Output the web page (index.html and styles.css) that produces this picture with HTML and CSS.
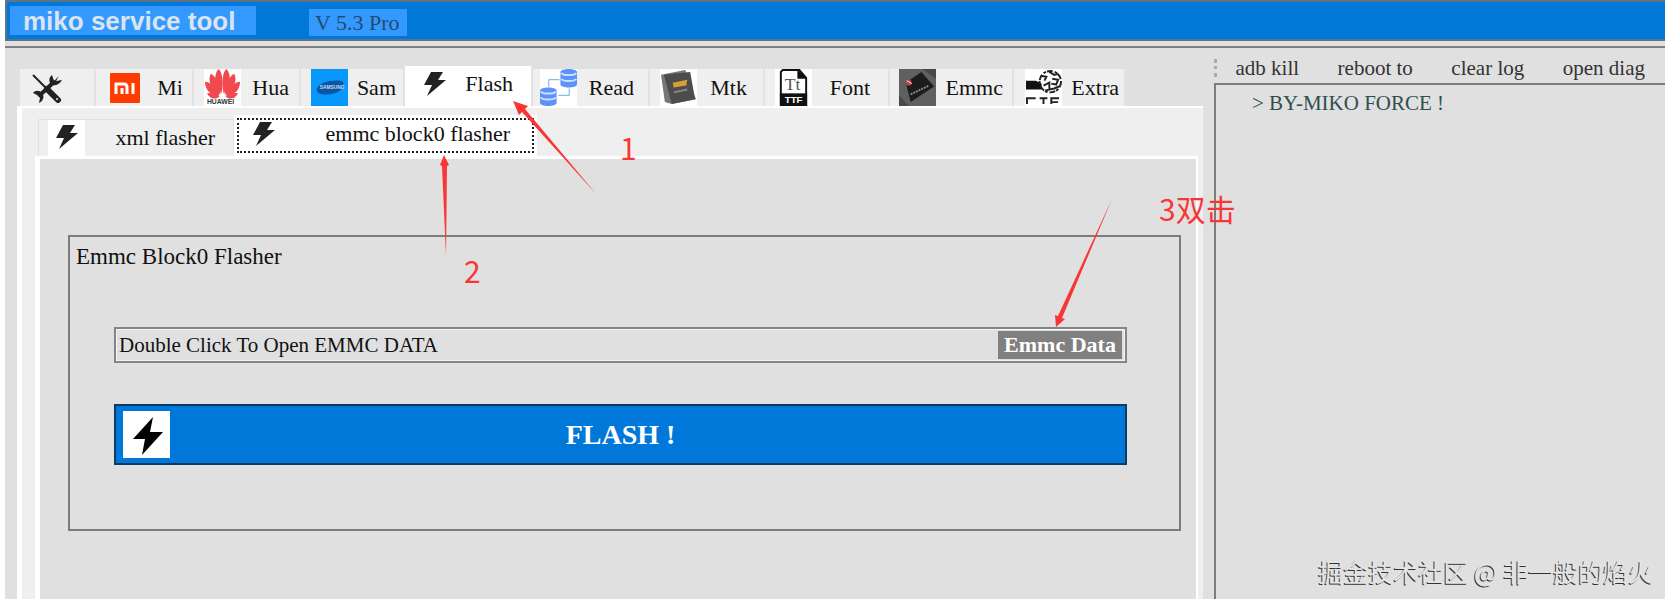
FILE: index.html
```html
<!DOCTYPE html>
<html lang="en">
<head>
    <meta charset="UTF-8">
    <meta name="viewport" content="width=device-width, initial-scale=1.0">
    <title>miko service tool</title>
    <link rel="stylesheet" href="styles.css">
</head>
<body>
    <svg class="symbols" aria-hidden="true">
        <symbol id="bolt" viewBox="0 0 24 26">
            <path d="M8 1H20L15 9H23L4 25L9 14H1Z"/>
        </symbol>
    </svg>

    <div class="window">
        <header class="titlebar">
            <h1 class="app-name">miko service tool</h1>
            <span class="version">V 5.3 Pro</span>
        </header>

        <div class="content">
            <main class="work">
                <nav class="tabs">
                    <button class="tab tab-tools" aria-label="Tools">
                        <svg class="icon-small" viewBox="0 0 30 30">
                            <path d="M1 2L14 15" stroke="#222" stroke-width="2"/>
                            <path d="M15 16L26 27" stroke="#222" stroke-width="6" stroke-linecap="round"/>
                            <path d="M7 23L23 8" stroke="#222" stroke-width="4"/>
                            <path d="M27 3L22 8L20 2C16 5 17 10 20 12C24 13 28 11 30 7L24 8Z" fill="#222"/>
                            <path d="M1 20C3 17 8 17 10 20C13 24 11 28 7 30L8 25L5 22Z" fill="#222"/>
                            <circle cx="25" cy="26" r="1" fill="#eee"/>
                        </svg>
                    </button>
                    <button class="tab tab-mi">
                        <svg class="icon-small" viewBox="0 0 30 30">
                            <rect width="30" height="30" rx="1" fill="#ff3c00"/>
                            <path d="M6 21V11H14Q17 11 17 14V21M12 15V21M23 10V21" fill="none" stroke="#fff" stroke-width="3"/>
                        </svg>
                        Mi
                    </button>
                    <button class="tab tab-hua">
                        <svg class="icon" viewBox="0 0 38 38">
                            <rect width="38" height="38" fill="#fff"/>
                            <g fill="#f04a50">
                                <path d="M18 25C10 17 10 5 15 0C19 3 20 14 18 25Z"/>
                                <path d="M20 25C28 17 28 5 23 0C19 3 18 14 20 25Z"/>
                                <path d="M17 26C8 22 3 12 7 5C12 7 16 16 17 26Z"/>
                                <path d="M21 26C30 22 35 12 31 5C26 7 22 16 21 26Z"/>
                                <path d="M16 27C8 28 1 22 1 13C7 13 14 20 16 27Z"/>
                                <path d="M22 27C30 28 37 22 37 13C31 13 24 20 22 27Z"/>
                                <path d="M16 28C12 32 6 31 3 25C8 24 13 26 16 28Z"/>
                                <path d="M22 28C26 32 32 31 35 25C30 24 25 26 22 28Z"/>
                            </g>
                            <text x="3" y="36" class="logo-text" font-size="7" fill="#333">HUAWEI</text>
                        </svg>
                        Hua
                    </button>
                    <button class="tab tab-sam">
                        <svg class="icon" viewBox="0 0 38 38">
                            <rect width="38" height="38" fill="#0898fc"/>
                            <path d="M6 20C8 13 27 10 33 13C35 20 28 25 19 26C10 27 5 25 6 20Z" fill="#0a56a6"/>
                            <text x="9" y="21" class="logo-text" font-size="5" fill="#cde">SAMSUNG</text>
                        </svg>
                        Sam
                    </button>
                    <button class="tab tab-flash selected">
                        <svg class="icon-bolt"><use href="#bolt"/></svg>
                        Flash
                    </button>
                    <button class="tab tab-read">
                        <svg class="icon" viewBox="0 0 38 38">
                            <rect width="38" height="38" fill="#fff"/>
                            <path d="M9 18V11H20M30 20V27H19" fill="none" stroke="#6f9ff5" stroke-width="1"/>
                            <g fill="#5b93fa">
                                <path d="M21 3V16C21 20 38 20 38 16V3C38 -1 21 -1 21 3Z"/>
                                <path d="M0 22V35C0 39 17 39 17 35V22C17 18 0 18 0 22Z"/>
                            </g>
                            <path d="M22 4C23 7 36 7 37 4M22 10C23 13 36 13 37 10M1 23C2 26 15 26 16 23M1 29C2 32 15 32 16 29" fill="none" stroke="#cfe0ff" stroke-width="2"/>
                        </svg>
                        Read
                    </button>
                    <button class="tab tab-mtk">
                        <svg class="icon" viewBox="0 0 38 38">
                            <rect width="38" height="38" fill="#fff"/>
                            <path d="M1 6L26 1L37 31L12 36L5 34Z" fill="#777"/>
                            <path d="M4 6L31 3L36 31L12 36Z" fill="#4c4c4c"/>
                            <path d="M13 14L28 11L27 17L14 19Z" fill="#d6a033"/>
                            <path d="M14 24L28 21" stroke="#888" stroke-width="2"/>
                        </svg>
                        Mtk
                    </button>
                    <button class="tab tab-font">
                        <svg class="icon" viewBox="0 0 38 38">
                            <rect width="38" height="38" fill="#fff"/>
                            <path d="M8 1H25L32 9V37H6V3Z" fill="#fff" stroke="#111" stroke-width="2"/>
                            <path d="M23 0L33 10H23Z" fill="#111"/>
                            <rect x="5" y="25" width="28" height="13" fill="#111"/>
                            <text x="10" y="22" class="serif-text" font-size="18" fill="#555">Tt</text>
                            <text x="10" y="35" class="logo-text" font-size="10" fill="#fff">TTF</text>
                        </svg>
                        Font
                    </button>
                    <button class="tab tab-emmc">
                        <svg class="icon" viewBox="0 0 38 38">
                            <rect width="38" height="38" fill="#606060"/>
                            <path d="M0 27L10 38H0ZM24 0H38V10Z" fill="#484848"/>
                            <path d="M7 14L23 3L36 18L12 34Z" fill="#1c1c1c"/>
                            <path d="M12 26L31 17" stroke="#888" stroke-width="2" stroke-dasharray="2 1"/>
                            <circle cx="10" cy="14" r="3" fill="#c33c4c"/>
                            <path d="M8 12L13 15" stroke="#eee"/>
                        </svg>
                        Emmc
                    </button>
                    <button class="tab tab-extra">
                        <svg class="icon" viewBox="0 0 38 38">
                            <rect width="38" height="38" fill="#fff"/>
                            <path d="M1 12H11L17 15V21H1Z" fill="#111"/>
                            <circle cx="26" cy="13" r="11" fill="none" stroke="#222" stroke-width="2" stroke-dasharray="6 2 3 1"/>
                            <path d="M16 7L22 8L20 12M25 3L30 6L34 5M19 17L25 14L25 20M28 10L34 11L32 16L27 15M21 22L30 20L35 18" fill="none" stroke="#222" stroke-width="2"/>
                            <path d="M2 36V30H11M15 30H23M19 30V36M35 30H27V36M27 34H34" fill="none" stroke="#222" stroke-width="2"/>
                        </svg>
                        Extra
                    </button>
                </nav>

                <div class="panel">
                    <nav class="subtabs">
                        <button class="subtab subtab-xml">
                            <span class="icon-box"><svg class="icon-bolt"><use href="#bolt"/></svg></span>
                            xml flasher
                        </button>
                        <button class="subtab subtab-emmc selected">
                            <svg class="icon-bolt"><use href="#bolt"/></svg>
                            emmc block0 flasher
                        </button>
                    </nav>

                    <div class="page">
                        <section class="group">
                            <h2 class="group-title"><label for="emmc-file">Emmc Block0 Flasher</label></h2>
                            <div class="file-row">
                                <input type="text" id="emmc-file" class="file-input" value="Double Click To Open EMMC DATA" readonly>
                                <button class="file-button">Emmc Data</button>
                            </div>
                            <button class="flash-button">
                                <svg class="flash-icon" viewBox="0 0 47 47">
                                    <rect width="47" height="47" fill="#fff"/>
                                    <path d="M30 6L10 28H22L19 44L40 21H27Z" fill="#000"/>
                                </svg>
                                FLASH !
                            </button>
                        </section>
                    </div>
                </div>
            </main>

            <aside class="side">
                <div class="toolbar">
                    <span class="grip"></span>
                    <button class="tool">adb kill</button>
                    <button class="tool">reboot to</button>
                    <button class="tool">clear log</button>
                    <button class="tool">open diag</button>
                </div>
                <div class="log">&gt; BY-MIKO FORCE !</div>
            </aside>
        </div>

        <!-- step arrows and numbers drawn over the window -->
        <svg class="arrows" aria-hidden="true">
            <path d="M508 101L523 106L520 109L592 195L517 112L514 115Z"/>
            <path d="M439 155L444 165L442 166L441 256L437 166L435 165Z"/>
            <path d="M1051 327L1050 315L1053 316L1107 199L1057 318L1060 319Z"/>
        </svg>
        <span class="note note-1">1</span>
        <span class="note note-2">2</span>
        <span class="note note-3">3双击</span>
        <span class="watermark">掘金技术社区 @ 非一般的焰火</span>
    </div>
</body>
</html>
```
FILE: styles.css
```css
* {
    box-sizing: border-box;
}
body {
    margin: 0;
    background-color: white;
    color: #111;
    font-family: "Liberation Serif", "Times New Roman", serif;
    font-size: 22px;
    line-height: 26px;
}
button, input {
    margin: 0;
    padding: 0;
    border: none;
    border-radius: 0;
    background: none;
    color: inherit;
    font: inherit;
}
button {
    cursor: pointer;
}
svg {
    display: block;
    flex: none;
}
.symbols {
    position: absolute;
    width: 0;
    height: 0;
}
.window {
    position: relative;
    display: flex;
    flex-direction: column;
    min-height: calc(100vh - 7px);
    margin: 0 7px 7px 5px;
    background-color: #e0e0e0;
}

/* title bar */
.titlebar {
    display: flex;
    align-items: flex-start;
    gap: 53px;
    height: 41px;
    padding: 4px 3px;
    background-color: #0078d9;
    border: 2px solid #5d7386;
    border-right: none;
}
.app-name {
    width: 246px;
    height: 29px;
    margin: 0;
    padding-left: 13px;
    background-color: #3399ff;
    color: #dce4ee;
    font-family: "Liberation Sans", Arial, sans-serif;
    font-size: 26px;
    line-height: 30px;
}
.version {
    height: 27px;
    margin-top: 3px;
    padding: 1px 7px 0 6px;
    background-color: #3399ff;
    color: #234a70;
}
.content {
    display: flex;
    flex: 1;
    gap: 11px;
    margin-top: 5px;
    border-top: 2px solid #808080;
}
.work {
    display: flex;
    flex: 1;
    flex-direction: column;
    padding: 18px 0 0 12px;
}

/* main tabs */
.tabs {
    display: grid;
    grid-template-columns: 76px 98px 107px 104px 128px 117px 115px 125px 124px 112px;
    align-items: end;
    height: 40px;
    padding-left: 3px;
}
.tab {
    display: flex;
    align-items: center;
    justify-content: space-between;
    height: 37px;
    background-color: #efefef;
    border-right: 2px solid #e2e2e2;
}
.tab-tools { padding: 0 0 0 12px; }
.tab-mi { padding: 0 9px 0 14px; }
.tab-hua { padding: 0 10px; }
.tab-sam { padding: 0 7px 0 10px; }
.tab-flash { padding: 0 18px 4px; }
.tab-read { padding: 0 14px 0 7px; }
.tab-mtk { padding: 0 16px 0 10px; }
.tab-font { padding: 0 18px 0 10px; }
.tab-emmc { padding: 0 9px; }
.tab-extra { padding: 0 5px 0 11px; }
.tab.selected {
    height: 40px;
    background-color: white;
}
.icon {
    width: 37px;
    height: 37px;
}
.icon-small {
    width: 30px;
    height: 30px;
}
.icon-bolt {
    width: 24px;
    height: 26px;
    fill: #222;
}
.logo-text {
    font-family: "Liberation Sans", Arial, sans-serif;
    font-weight: bold;
}
.serif-text {
    font-family: "Liberation Serif", serif;
}

/* tab panel */
.panel {
    display: flex;
    flex: 1;
    flex-direction: column;
    padding: 7px 5px 0 13px;
    background-color: #efefef;
    border-top: 2px solid white;
    border-left: 5px solid white;
}
.subtabs {
    display: flex;
    align-items: flex-end;
    height: 41px;
    padding-left: 3px;
}
.subtab {
    display: flex;
    align-items: center;
    justify-content: space-between;
    height: 37px;
    border: 1px solid #e2e2e2;
    border-bottom: none;
}
.subtab-xml {
    width: 196px;
    padding: 0 18px 0 9px;
}
.subtab-emmc {
    width: 303px;
    padding: 0 24px 3px 15px;
}
.subtab.selected {
    height: 41px;
    background-color: white;
    border: 3px solid white;
    outline: 2px dotted #222;
    outline-offset: -5px;
}
.icon-box {
    display: flex;
    justify-content: center;
    width: 37px;
    height: 37px;
    padding-top: 4px;
    background-color: white;
}
.page {
    flex: 1;
    padding: 76px 15px 67px 28px;
    background-color: #e0e0e0;
    border-top: 3px solid white;
    border-left: 5px solid white;
    border-right: 2px solid white;
}
.group {
    padding: 7px 52px 64px 44px;
    border: 2px solid #7c7c7c;
}
.group-title {
    margin: 0 0 57px -38px;
    font-size: 23px;
    font-weight: normal;
    line-height: 26px;
}
.file-row {
    display: flex;
    height: 36px;
    margin-bottom: 41px;
    padding: 2px 3px 2px 2px;
    border: 2px solid #858585;
    box-shadow: inset 0 0 0 1px #f4f4f4;
}
.file-input {
    flex: 1;
    min-width: 0;
    padding-left: 1px;
    font-size: 21px;
}
.file-button {
    width: 124px;
    background-color: #808080;
    color: white;
    font-weight: bold;
}
.flash-button {
    display: grid;
    grid-template-columns: 47px 1fr 47px;
    align-items: center;
    width: 100%;
    height: 61px;
    padding: 0 7px;
    background-color: #0078d9;
    border: 2px solid #0b3c68;
    color: white;
    font-size: 28px;
    font-weight: bold;
}
.flash-icon {
    width: 47px;
    height: 47px;
}

/* log side */
.side {
    display: flex;
    flex-direction: column;
    width: 451px;
    font-size: 21px;
}
.toolbar {
    display: flex;
    align-items: center;
    justify-content: space-between;
    height: 35px;
    padding: 4px 20px 0 0;
    color: #333;
}
.grip {
    width: 2px;
    height: 18px;
    margin-right: -20px;
    border-left: 3px dotted #aaa;
}
.log {
    flex: 1;
    padding: 5px 36px;
    border: 2px solid #7c7c7c;
    border-right: none;
    border-bottom: none;
    color: #2f4f4f;
}

/* overlay notes */
.arrows {
    position: absolute;
    inset: 0;
    width: 100%;
    height: 100%;
    fill: #f93636;
    pointer-events: none;
}
.note {
    position: absolute;
    color: #f93636;
    font-family: "Noto Sans CJK SC", sans-serif;
    font-size: 30px;
    line-height: 32px;
}
.note-1 {
    top: 131px;
    left: 615px;
}
.note-2 {
    top: 254px;
    left: 459px;
}
.note-3 {
    top: 192px;
    left: 1154px;
}
.watermark {
    position: absolute;
    right: 12px;
    bottom: 12px;
    color: #e4e4e4;
    font-family: "Noto Sans CJK SC", sans-serif;
    font-size: 25px;
    line-height: 32px;
    text-shadow: -1px 1px 0 #333;
}
```
